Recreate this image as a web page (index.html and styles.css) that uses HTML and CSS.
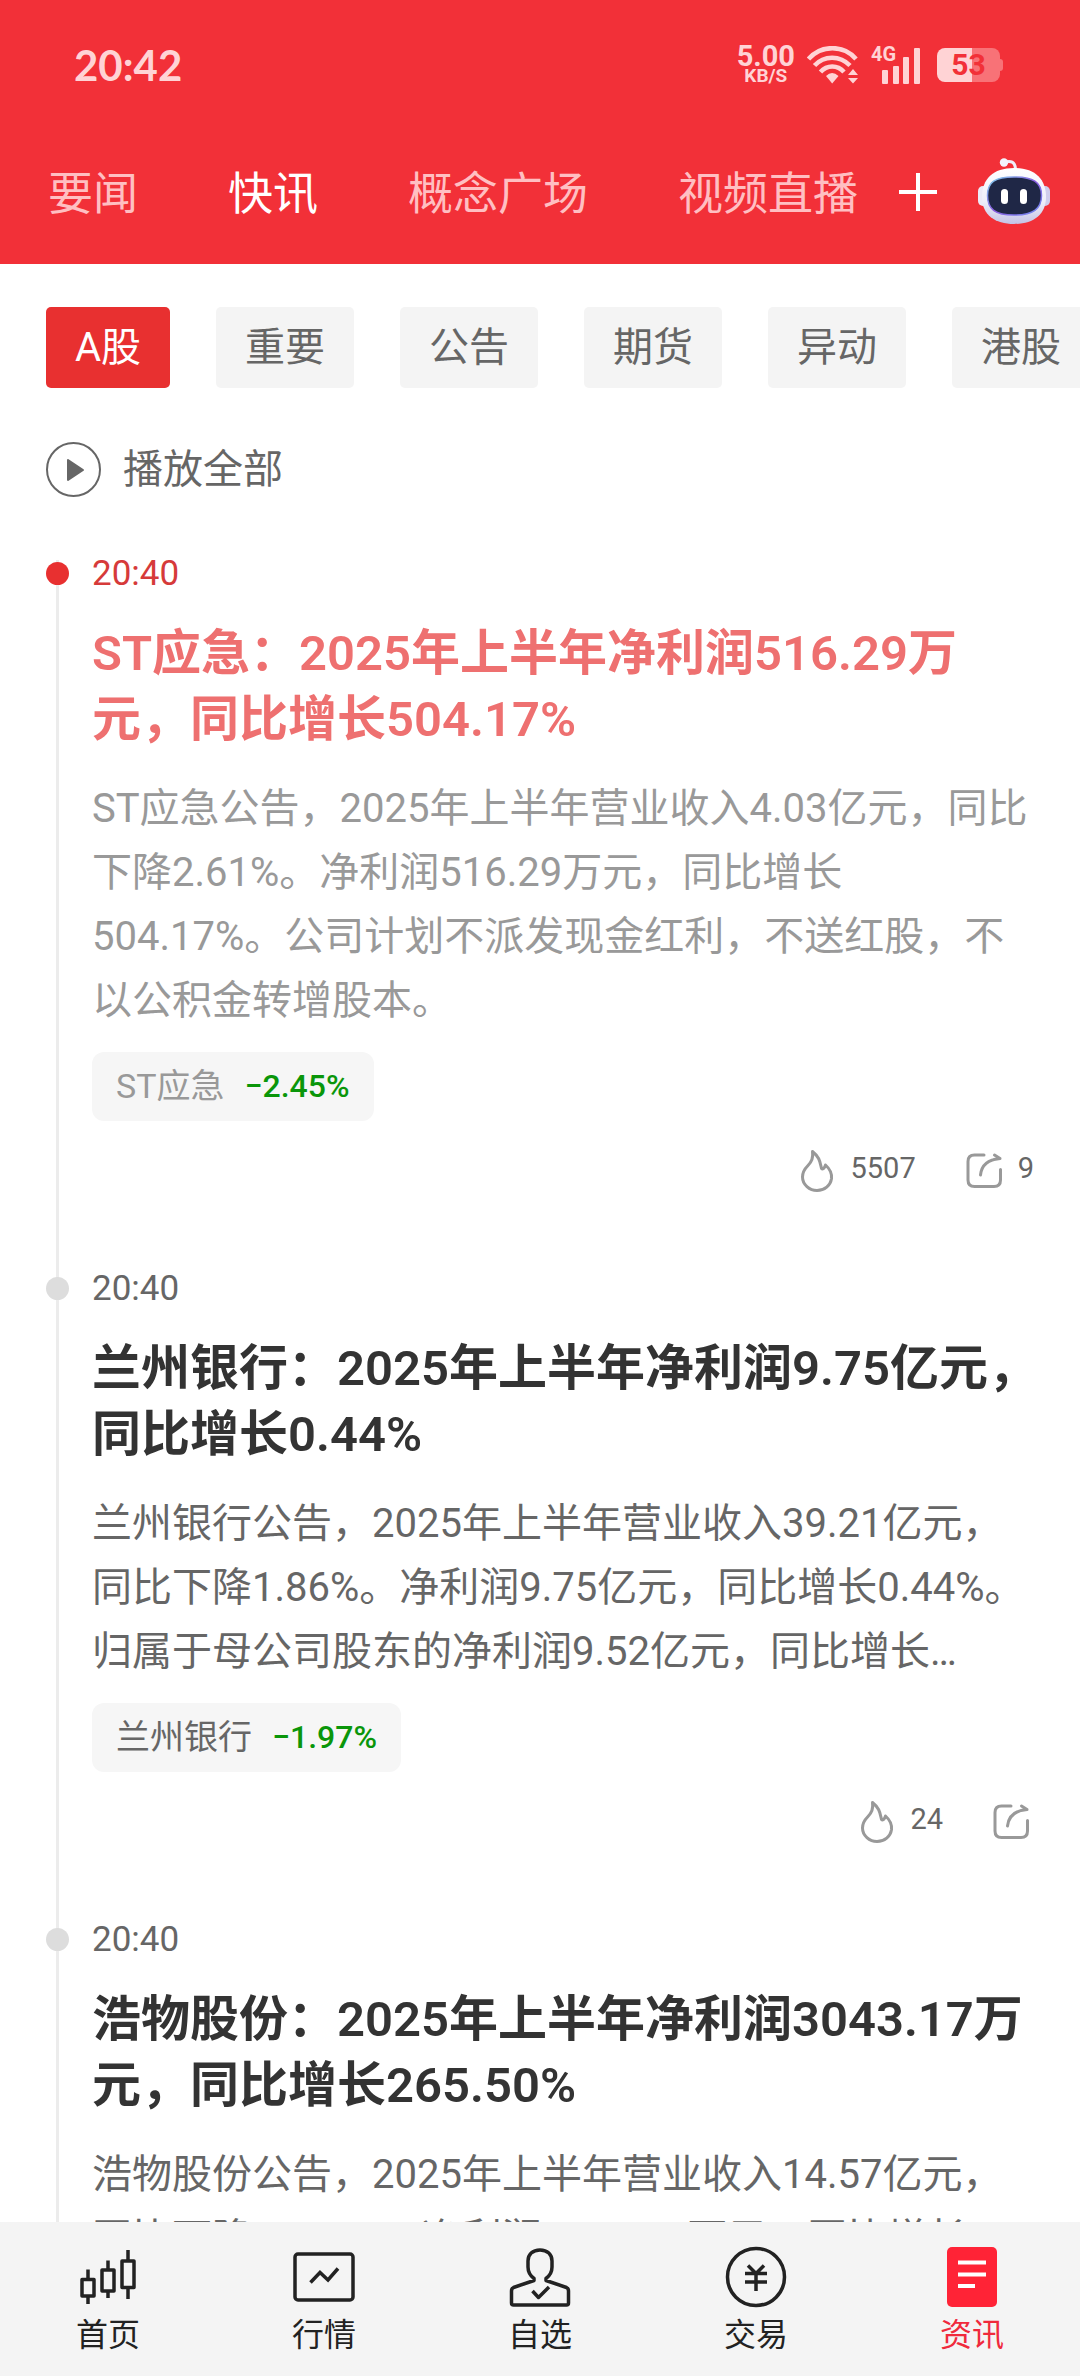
FILE: index.html
```html
<!DOCTYPE html>
<html lang="zh-CN">
<head>
    <meta charset="UTF-8">
    <meta name="viewport" content="width=device-width, initial-scale=1.0">
    <title>快讯</title>
    <link rel="stylesheet" href="styles.css">
</head>
<body>
    <svg class="sprite" aria-hidden="true">
        <symbol id="icon-fire" viewBox="0 0 45 45">
            <path d="M18.500 3.500C26 9.500 26 14.500 27.500 20.500c1 1 3 0 4-3.500 4.500 4 6.500 8.500 6 13.500-1 7-7 12-14.500 12S8.500 36.500 8.500 29c0-5 2.500-8.500 5.500-11.500C17.500 14 19.500 10 18.500 3.500z" fill="none" stroke="#999" stroke-width="3" stroke-linejoin="round"/>
        </symbol>
        <symbol id="icon-share" viewBox="0 0 45 45">
            <g fill="none" stroke="#999" stroke-width="3" stroke-linecap="round" stroke-linejoin="round">
                <path d="M22 7h-9.500Q6 7 6 13.500v18.500Q6 38.500 12.500 38.500h19.500q6.500 0 6.500-6.500V21.500"/>
                <path d="M18.500 27C19.500 17.500 26 11.500 38 10.500L32.500 7M38 10.500l-6 1"/>
            </g>
        </symbol>
    </svg>

    <header class="header">
        <div class="status-bar">
            <span class="clock">20:42</span>
            <div class="status-icons">
                <div class="net-speed">
                    <span class="speed-value">5.00</span>
                    <span class="speed-unit">KB/S</span>
                </div>
                <svg class="wifi" viewBox="0 0 52 38" aria-hidden="true">
                    <g fill="none" stroke="#ffd3d5" stroke-width="4.500">
                        <path d="M1.500 13C14-1.500 37-1.500 49 13"/>
                        <path d="M7.500 19.500C17 9 33 9 43 19.500"/>
                        <path d="M13.500 26C20 18.500 30.500 18.500 37 26"/>
                    </g>
                    <path d="M19 30q6-6 12.500 0L25.200 37.500z" fill="#ffd3d5"/>
                    <path d="M41 29l5-6 5 6zM41 32l5 5.500 5-5.500z" fill="#ffd3d5"/>
                </svg>
                <div class="signal">
                    <span class="signal-type">4G</span>
                    <svg class="signal-bars" viewBox="0 0 40 38" aria-hidden="true">
                        <g fill="#ffd3d5">
                            <rect x="1" y="24" width="6" height="14" rx="1"/>
                            <rect x="12" y="20" width="6" height="18" rx="1"/>
                            <rect x="22" y="11" width="6" height="27" rx="1"/>
                            <rect x="33" y="2" width="6" height="36" rx="1"/>
                        </g>
                    </svg>
                </div>
                <div class="battery"><span class="battery-body">53</span></div>
            </div>
        </div>

        <nav class="top-nav">
            <div class="tabs">
                <a class="tab" href="#yaowen">要闻</a>
                <a class="tab active" href="#kuaixun">快讯</a>
                <a class="tab" href="#gainian">概念广场</a>
                <a class="tab" href="#zhibo">视频直播</a>
            </div>
            <button class="icon-btn" aria-label="添加">
                <svg class="plus" viewBox="0 0 38 38"><path d="M19 0v38M0 19h38" stroke="#fff" stroke-width="4"/></svg>
            </button>
            <button class="icon-btn" aria-label="助手">
                <svg class="robot" viewBox="0 0 72 68">
                    <defs>
                        <linearGradient id="shell" x1="0" y1="0" x2="0" y2="1">
                            <stop offset="0" stop-color="#ffffff"/>
                            <stop offset="0.600" stop-color="#eeeefa"/>
                            <stop offset="1" stop-color="#c3c3e6"/>
                        </linearGradient>
                        <linearGradient id="rim" x1="0" y1="0" x2="1" y2="1">
                            <stop offset="0" stop-color="#7fd4ec"/>
                            <stop offset="0.500" stop-color="#8a5ce0"/>
                            <stop offset="1" stop-color="#6f8cf0"/>
                        </linearGradient>
                    </defs>
                    <path d="M26 4.500C33 2 37 4 37.500 11" fill="none" stroke="#f0eefa" stroke-width="3"/>
                    <circle cx="26" cy="4.500" r="4.200" fill="#f4f3fc"/>
                    <rect x="0" y="28" width="11" height="20" rx="5" fill="#eceaf8"/>
                    <rect x="61" y="28" width="11" height="20" rx="5" fill="#cfcdec"/>
                    <path d="M36 10C57 10 68 21 68 39 68 57 55 66 36 66S4 57 4 39C4 21 15 10 36 10z" fill="url(#shell)"/>
                    <path d="M36 19C55 19 63.500 24 63.500 37.500S55 57 36 57 9.500 51 9.500 37.500 17 19 36 19z" fill="#1f2746" stroke="url(#rim)" stroke-width="1.500"/>
                    <rect x="23" y="31" width="7" height="15" rx="3.500" fill="#fff"/>
                    <rect x="42" y="31" width="7" height="15" rx="3.500" fill="#fff"/>
                </svg>
            </button>
        </nav>
    </header>

    <main class="content">
        <div class="chips">
            <button class="chip active">A股</button>
            <button class="chip">重要</button>
            <button class="chip">公告</button>
            <button class="chip">期货</button>
            <button class="chip">异动</button>
            <button class="chip">港股</button>
        </div>

        <button class="play-all">
            <svg class="play-icon" viewBox="0 0 55 55" aria-hidden="true">
                <circle cx="27.500" cy="27.500" r="26.500" fill="none" stroke="#666" stroke-width="2"/>
                <path d="M22 18l15 10-15 10z" fill="#666" stroke="#666" stroke-width="2" stroke-linejoin="round"/>
            </svg>
            播放全部
        </button>

        <div class="timeline">
            <article class="item latest">
                <time class="item-time">20:40</time>
                <h2 class="item-title">ST应急：2025年上半年净利润516.29万元，同比增长504.17%</h2>
                <p class="item-text">ST应急公告，2025年上半年营业收入4.03亿元，同比下降2.61%。净利润516.29万元，同比增长504.17%。公司计划不派发现金红利，不送红股，不以公积金转增股本。</p>
                <a class="stock" href="#st-yingji">ST应急 <span class="change">−2.45%</span></a>
                <div class="actions">
                    <button class="action"><svg class="action-icon" aria-hidden="true"><use href="#icon-fire"/></svg>5507</button>
                    <button class="action" aria-label="分享 9"><svg class="action-icon" aria-hidden="true"><use href="#icon-share"/></svg>9</button>
                </div>
            </article>

            <article class="item">
                <time class="item-time">20:40</time>
                <h2 class="item-title">兰州银行：2025年上半年净利润9.75亿元，同比增长0.44%</h2>
                <p class="item-text">兰州银行公告，2025年上半年营业收入39.21亿元，同比下降1.86%。净利润9.75亿元，同比增长0.44%。归属于母公司股东的净利润9.52亿元，同比增长…</p>
                <a class="stock" href="#lanzhou-bank">兰州银行 <span class="change">−1.97%</span></a>
                <div class="actions">
                    <button class="action"><svg class="action-icon" aria-hidden="true"><use href="#icon-fire"/></svg>24</button>
                    <button class="action" aria-label="分享"><svg class="action-icon" aria-hidden="true"><use href="#icon-share"/></svg></button>
                </div>
            </article>

            <article class="item">
                <time class="item-time">20:40</time>
                <h2 class="item-title">浩物股份：2025年上半年净利润3043.17万元，同比增长265.50%</h2>
                <p class="item-text">浩物股份公告，2025年上半年营业收入14.57亿元，同比下降16.18%。净利润3043.17万元，同比增长</p>
            </article>
        </div>
    </main>

    <nav class="bottom-nav">
        <a class="nav-item" href="#home">
            <svg class="nav-icon" viewBox="0 0 64 64" aria-hidden="true">
                <g fill="none" stroke="#222" stroke-width="3.500" stroke-linejoin="round">
                    <path d="M6 34.500h12v16.500H6zM26 25h12v21H26zM46 16h12v26.500H46z"/>
                    <path d="M12 24.500v10M12 51v8M32 15.500V25M32 46v7M52 5v11M52 42.500V54"/>
                </g>
            </svg>
            首页
        </a>
        <a class="nav-item" href="#market">
            <svg class="nav-icon" viewBox="0 0 64 64" aria-hidden="true">
                <g fill="none" stroke="#222" stroke-width="3.500">
                    <rect x="3" y="9" width="58" height="46" rx="3"/>
                    <path d="M18.500 37.500l9.500-10 8 7.500 10-11.500"/>
                </g>
            </svg>
            行情
        </a>
        <a class="nav-item" href="#watchlist">
            <svg class="nav-icon" viewBox="0 0 64 64" aria-hidden="true">
                <g fill="none" stroke="#222" stroke-width="3.500" stroke-linejoin="round">
                    <path d="M32 5C24.500 5 20 9.500 20 16v6c0 5 2 8.500 6 11.500v2L5.500 42.500Q3.500 43.500 3.500 46v12q0 2 2 2h53q2 0 2-2V46q0-2.500-2-3.500L38 35.500v-2c4-3 6-6.500 6-11.500v-6C44 9.500 39.500 5 32 5z"/>
                    <path d="M24.500 46l6 6.500 10.500-10.500"/>
                </g>
            </svg>
            自选
        </a>
        <a class="nav-item" href="#trade">
            <svg class="nav-icon" viewBox="0 0 64 64" aria-hidden="true">
                <g fill="none" stroke="#222" stroke-width="3.500">
                    <circle cx="32" cy="32" r="28.500"/>
                    <path d="M24 20.500l8 8 8-8M21 28.500h22M21 37h22M32 28v18"/>
                </g>
            </svg>
            交易
        </a>
        <a class="nav-item active" href="#news">
            <svg class="nav-icon" viewBox="0 0 64 64" aria-hidden="true">
                <rect x="7" y="2" width="50" height="60" rx="5" fill="#ff2336"/>
                <path d="M18 17.500h28M18 29.500h28M18 41h17" stroke="#fff" stroke-width="4"/>
            </svg>
            资讯
        </a>
    </nav>
</body>
</html>
```

FILE: styles.css
```css
:root {
    --header-red: #f23038;
    --accent-red: #e83030;
    --status-pink: #ffd3d5;
    --grey-bg: #f4f4f4;
    --text-dark: #333;
    --text-mid: #666;
    --text-light: #999;
    --green: #0a960a;
}

* {
    margin: 0;
    padding: 0;
    box-sizing: border-box;
}

body {
    font-family: Roboto, "Noto Sans CJK SC", sans-serif;
    background-color: #fff;
    color: var(--text-mid);
    height: 100vh;
    display: flex;
    flex-direction: column;
    overflow: hidden;
}

a {
    color: inherit;
    text-decoration: none;
}

button {
    font: inherit;
    color: inherit;
    background: none;
    border: none;
    cursor: pointer;
}

svg {
    display: block;
    flex: none;
}

.sprite {
    position: absolute;
    width: 0;
    height: 0;
}

/* header */
.header {
    background-color: var(--header-red);
    flex: none;
}

.status-bar {
    display: flex;
    align-items: center;
    justify-content: space-between;
    height: 130px;
    padding: 0 77px 0 74px;
    color: var(--status-pink);
    font-weight: 700;
}

.clock {
    font-family: Lato, sans-serif;
    font-size: 42px;
}

.status-icons {
    display: flex;
    align-items: center;
    gap: 12px;
}

.net-speed {
    display: flex;
    flex-direction: column;
    align-items: center;
}

.speed-value {
    font-size: 29px;
    line-height: 22px;
}

.speed-unit {
    font-size: 19px;
    line-height: 18px;
}

.wifi {
    width: 52px;
    height: 38px;
}

.signal {
    display: flex;
    align-items: flex-start;
    height: 38px;
}

.signal-type {
    font-size: 20px;
    line-height: 16px;
    width: 10px;
}

.signal-bars {
    width: 40px;
    height: 38px;
}

.battery {
    display: flex;
    align-items: center;
    margin-left: 4px;
}

.battery-body {
    width: 63px;
    height: 34px;
    border-radius: 8px;
    background: linear-gradient(to right, var(--status-pink) 55%, #f87277 55%);
    color: var(--header-red);
    font-size: 30px;
    line-height: 34px;
    text-align: center;
}

.battery::after {
    content: '';
    width: 3px;
    height: 12px;
    border-radius: 0 3px 3px 0;
    background-color: #f87277;
}

.top-nav {
    display: flex;
    align-items: center;
    gap: 41px;
    height: 134px;
    padding: 0 30px 10px 48px;
}

.tabs {
    display: flex;
    flex: 1;
    min-width: 0;
    gap: 90px;
    padding-top: 6px;
    overflow: hidden;
}

.tab {
    font-size: 45px;
    line-height: 60px;
    color: #ffbfc2;
    white-space: nowrap;
}

.tab.active {
    color: #fff;
}

.plus {
    width: 38px;
    height: 38px;
}

.robot {
    width: 72px;
    height: 68px;
}

/* feed */
.content {
    flex: 1;
    min-height: 0;
    overflow: hidden;
    padding: 43px 40px 0 46px;
}

.chips {
    display: flex;
    gap: 46px;
    margin-right: -40px;
    overflow: hidden;
}

.chip {
    flex: none;
    padding: 0 29px;
    border-radius: 5px;
    background-color: var(--grey-bg);
    font-size: 40px;
    line-height: 81px;
}

.chip.active {
    background-color: var(--accent-red);
    color: #fff;
}

.play-all {
    display: flex;
    align-items: center;
    gap: 22px;
    margin-top: 54px;
    font-size: 40px;
    line-height: 55px;
}

.play-icon {
    width: 55px;
    height: 55px;
}

.timeline {
    margin-top: 63px;
}

.item {
    position: relative;
    padding: 0 0 82px 46px;
}

/* vertical rule behind the dots */
.item::before {
    content: '';
    position: absolute;
    left: 10px;
    top: 0;
    bottom: 0;
    width: 3px;
    background-color: #ececec;
}

.item::after {
    content: '';
    position: absolute;
    left: 0;
    top: 2px;
    width: 23px;
    height: 23px;
    border-radius: 50%;
    background-color: #ddd;
}

.item-time {
    display: block;
    font-size: 35px;
    line-height: 28px;
}

.item-title {
    margin-top: 33px;
    color: var(--text-dark);
    font-size: 49px;
    font-weight: 600;
    line-height: 66px;
}

.item-text {
    margin-top: 24px;
    padding-right: 6px;
    font-size: 40px;
    line-height: 64px;
}

.stock {
    display: inline-flex;
    gap: 20px;
    margin-top: 19px;
    padding: 0 24px;
    border-radius: 12px;
    background-color: #f6f6f6;
    font-size: 34px;
    line-height: 69px;
    vertical-align: top;
}

.change {
    color: var(--green);
    font-size: 32px;
    font-weight: 500;
}

.actions {
    display: flex;
    justify-content: flex-end;
    gap: 46px;
    margin-top: 27px;
    padding-right: 6px;
}

.action {
    display: flex;
    gap: 11px;
    font-size: 29px;
    line-height: 40px;
}

.action-icon {
    width: 45px;
    height: 45px;
}

.latest::after {
    background-color: var(--accent-red);
}

.latest .item-time {
    color: #d63a3a;
}

.latest .item-title {
    color: #ee7070;
}

.latest .item-text,
.latest .stock {
    color: var(--text-light);
}

/* bottom navigation */
.bottom-nav {
    display: flex;
    flex: none;
    padding: 23px 0 18px;
    background-color: var(--grey-bg);
}

.nav-item {
    display: flex;
    flex: 1;
    flex-direction: column;
    align-items: center;
    gap: 3px;
    color: #222;
    font-size: 32px;
    line-height: 46px;
}

.nav-item.active {
    color: #f02a3c;
}

.nav-icon {
    width: 64px;
    height: 64px;
}
```
